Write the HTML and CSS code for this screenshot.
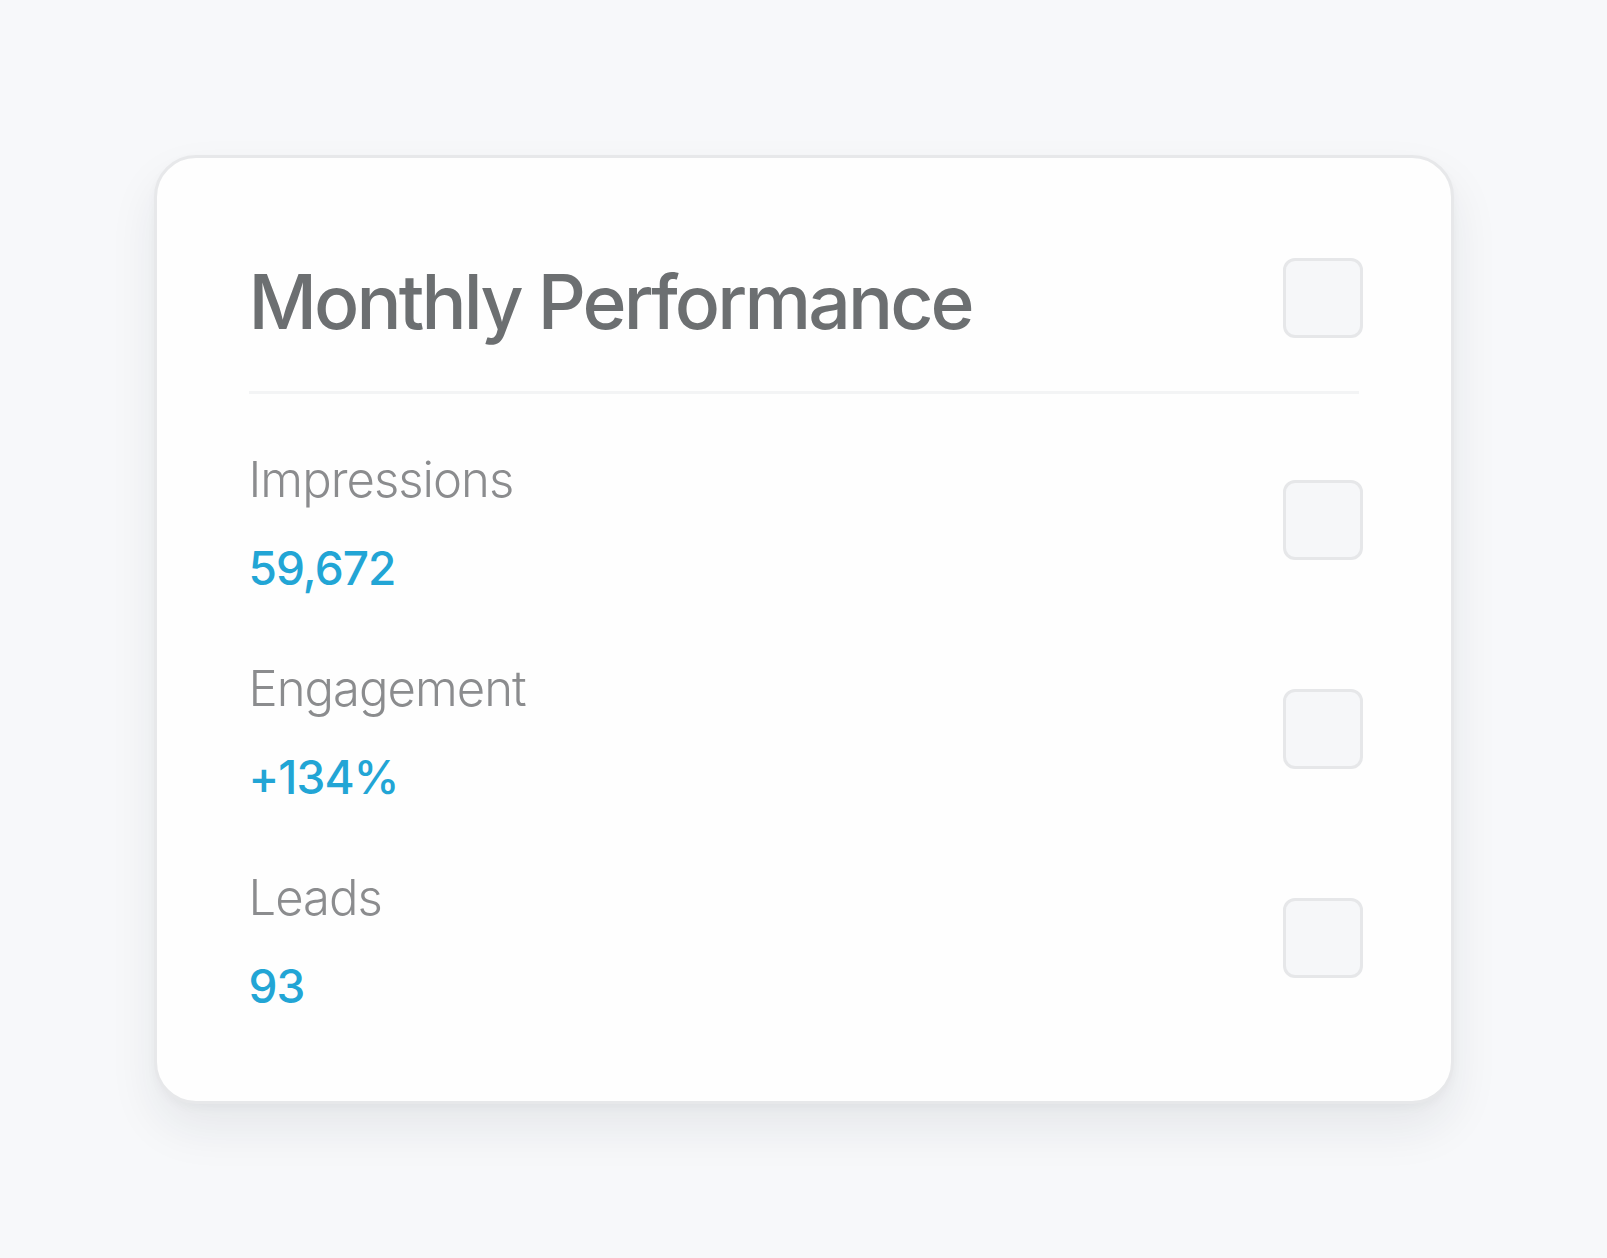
FILE: index.html
```html
<!DOCTYPE html>
<html lang="en">
<head>
<meta charset="utf-8">
<title>Monthly Performance</title>
<link rel="stylesheet" href="styles.css">
</head>
<body>
  <main class="card">
    <header class="card-header">
      <h1 class="title">Monthly Performance</h1>
      <span class="slot"></span>
    </header>
    <div class="divider"></div>
    <ul class="metrics">
      <li class="metric">
        <div class="metric-text">
          <div class="metric-label">Impressions</div>
          <div class="metric-value">59,672</div>
        </div>
        <span class="slot"></span>
      </li>
      <li class="metric">
        <div class="metric-text">
          <div class="metric-label">Engagement</div>
          <div class="metric-value">+134%</div>
        </div>
        <span class="slot"></span>
      </li>
      <li class="metric">
        <div class="metric-text">
          <div class="metric-label">Leads</div>
          <div class="metric-value">93</div>
        </div>
        <span class="slot"></span>
      </li>
    </ul>
  </main>
</body>
</html>
```
FILE: styles.css
```css
* { box-sizing: border-box; }

html, body {
  margin: 0;
  padding: 0;
}

body {
  min-height: 100vh;
  background: #f7f8fa;
  display: flex;
  align-items: center;
  justify-content: center;
  font-family: Inter, "Noto Sans", sans-serif;
}

.card {
  width: 1300px;
  background: #fefefe;
  border: 3px solid #e7e8ea;
  border-radius: 42px;
  padding: 100px 88px 91px 92px;
  box-shadow: 0 24px 48px rgba(30, 35, 45, 0.08), 0 4px 10px rgba(30, 35, 45, 0.03);
}

.card-header {
  display: flex;
  justify-content: space-between;
  align-items: flex-start;
}

.title {
  margin: 5px 0 0 0;
  font-size: 75px;
  line-height: 77px;
  font-weight: 500;
  color: #6c6f71;
  letter-spacing: -0.038em;
}

.slot {
  flex: none;
  width: 80px;
  height: 80px;
  border: 3px solid #e6e7e9;
  border-radius: 12px;
  background: #f6f7f9;
}

.divider {
  height: 3px;
  background: #f3f4f5;
  margin: 51px 4px 0 0;
}

.metrics {
  list-style: none;
  margin: 55px 0 0 0;
  padding: 0;
  display: flex;
  flex-direction: column;
  gap: 66px;
}

.metric {
  display: flex;
  justify-content: space-between;
  align-items: center;
}

.metric-text {
  display: flex;
  flex-direction: column;
  gap: 40px;
  padding-top: 6px;
}

.metric-label {
  font-size: 49px;
  line-height: 49px;
  font-weight: 300;
  color: #8b8c8e;
  letter-spacing: -0.02em;
}

.metric-value {
  font-size: 46px;
  line-height: 48px;
  font-weight: 500;
  color: #22a5d5;
  letter-spacing: -0.02em;
}
```
